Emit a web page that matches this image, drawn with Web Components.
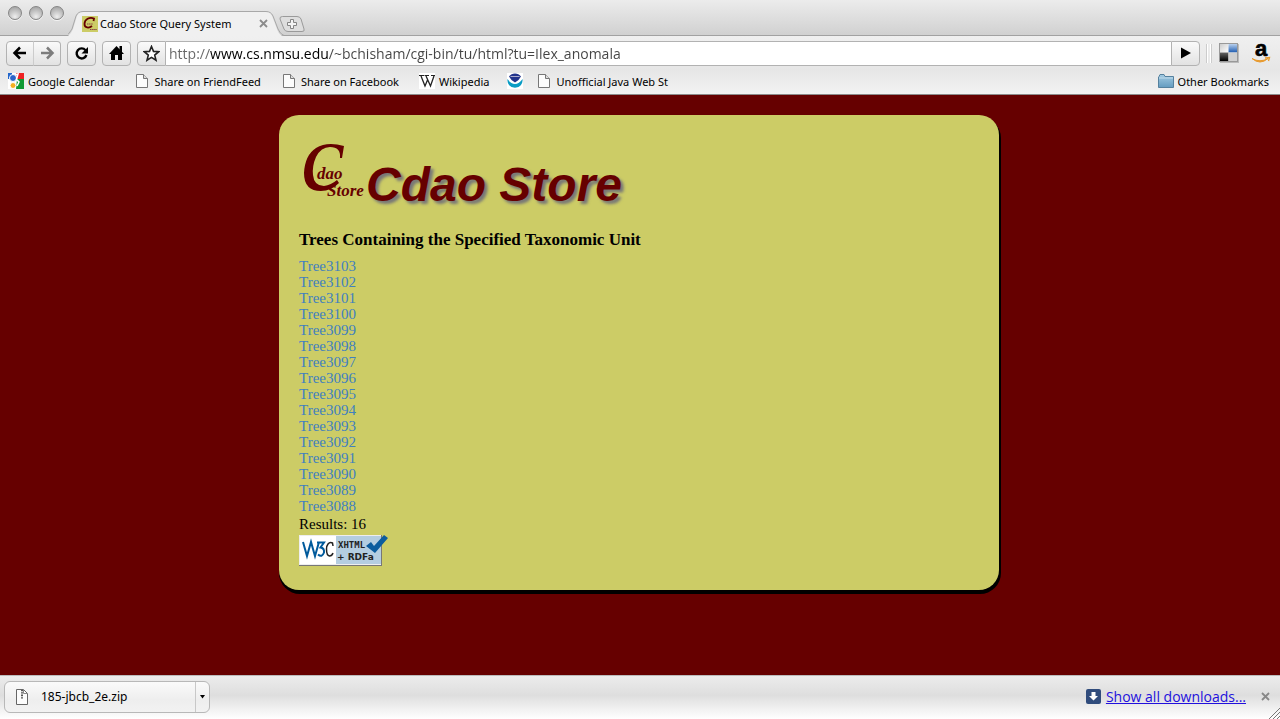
<!DOCTYPE html>
<html lang="en">
<head>
<meta charset="utf-8">
<title>Cdao Store Query System</title>
<style>
  html, body { margin: 0; height: 100%; }
  body { font-family: "Noto Sans", "Open Sans", sans-serif; font-size: 11px; color: #000; }
</style>
</head>
<body>
<browser-window>
  <tab-strip slot="top"></tab-strip>
  <nav-toolbar slot="top"></nav-toolbar>
  <bookmarks-bar slot="top"></bookmarks-bar>
  <store-card></store-card>
  <download-shelf slot="bottom"></download-shelf>
</browser-window>

<script>
function define(name, html) {
  const template = document.createElement('template');
  template.innerHTML = '<style>:host,*{box-sizing:border-box}svg{display:block;flex:none}button{font:inherit;color:inherit;margin:0;padding:0;cursor:pointer}</style>' + html;
  customElements.define(name, class extends HTMLElement {
    constructor() {
      super();
      this.attachShadow({ mode: 'open' }).append(template.content.cloneNode(true));
      if (this.shadowRoot.querySelector('ul[data-first]')) this.fillList();
    }
    fillList() {
      const list = this.shadowRoot.querySelector('ul[data-first]');
      for (let n = Number(list.dataset.first); n >= Number(list.dataset.last); n--) {
        const item = document.createElement('li');
        const link = document.createElement('a');
        link.href = '#Tree' + n;
        link.textContent = 'Tree' + n;
        item.append(link);
        list.append(item);
      }
    }
  });
}

define('browser-window', `
<style>
  :host { display: flex; flex-direction: column; min-height: 100vh; background: #600; }
  main { flex: 1; padding: 20px 22px 20px 20px; }
</style>
<header><slot name="top"></slot></header>
<main><slot></slot></main>
<footer><slot name="bottom"></slot></footer>`);

define('tab-strip', `
<style>
  :host { display: flex; height: 36px; padding-left: 8px; background: linear-gradient(#ececec, #d0d0d0); box-shadow: inset 0 -1px #a2a2a2; }
  .lights { display: flex; gap: 7px; padding-top: 6px; width: 60px; }
  .lights button { width: 14px; height: 14px; border-radius: 50%; border: 1px solid #858585; background: radial-gradient(circle at 50% 80%, #eee, #aaa 80%); box-shadow: 0 1px #f4f4f4; }
  .tab { position: relative; display: flex; align-items: center; width: 216px; height: 25px; margin-top: 11px; padding: 0 16px 0 14px; }
  .tab .shape { position: absolute; inset: 0; }
  .tab > :not(.shape) { position: relative; }
  .title { flex: 1; margin-left: 2px; white-space: nowrap; }
  button { border: 0; background: none; }
  .new { align-self: flex-end; height: 20px; margin-left: -5px; position: relative; }
</style>
<div class="lights"><button aria-label="Close"></button><button aria-label="Minimize"></button><button aria-label="Zoom"></button></div>
<div class="tab">
  <svg class="shape" width="216" height="25" viewBox="0 0 216 25"><path d="M0 25 Q3 23 5 18 L9 5 Q11 1 15 1 H198 Q202 1 204 5 L209 18 Q211 24 215 25 Z" fill="#f0f0f0"/><path d="M-3 24.500 Q1 24 4 18 L8 5 Q10 .5 15 .5 H198 Q203 .5 205 5 L210 18 Q212 23 216 24.500" fill="none" stroke="#a8a8a8"/></svg>
  <svg width="16" height="16" viewBox="0 0 16 16"><rect width="16" height="16" fill="#cc6"/><path d="M11.500 5 L12 2.500 C7.500 .5 2.500 3.500 2.500 8 C2.500 12 7 12.500 10 10" fill="none" stroke="#600" stroke-width="1.800"/><path d="M5 8h6M8 13.500h7" stroke="#844" stroke-dasharray="1.500 .6"/></svg>
  <span class="title">Cdao Store Query System</span>
  <button aria-label="Close tab"><svg width="9" height="9" viewBox="0 0 9 9"><path d="M1 1 8 8M8 1 1 8" stroke="#8c8c8c" stroke-width="1.800"/></svg></button>
</div>
<button class="new" aria-label="New tab"><svg width="28" height="20" viewBox="0 0 28 20"><path d="M3.500 .5 H18 Q21 .5 22 3 L25 13 Q26 15.500 23 15.500 H9 Q6 15.500 5 13 L1 3 Q.5 .5 3.500 .5 Z" fill="#dedede" stroke="#9a9a9a"/><path d="M11.500 3.500h3v3h3v3h-3v3h-3v-3h-3v-3h3z" fill="#f4f4f4" stroke="#858585"/></svg></button>`);

define('nav-toolbar', `
<style>
  :host { display: flex; align-items: center; height: 34px; padding: 0 9px 0 6px; background: linear-gradient(#f0f0f0, #e6e6e6); }
  button { display: flex; align-items: center; justify-content: center; width: 29px; height: 25px; border: 1px solid #b2b2b2; border-radius: 4px; background: linear-gradient(#fafafa, #e2e2e2); }
  .back { width: 28px; border-radius: 4px 0 0 4px; }
  .fwd { width: 28px; border-left-color: #ccc; margin: 0 6px 0 -1px; border-radius: 0 4px 4px 0; }
  .home { margin: 0 6px; }
  .star { border-radius: 4px 0 0 4px; }
  .field { flex: 1; min-width: 0; height: 25px; background: #fff; border: solid #b2b2b2; border-width: 1px 0; }
  input { display: block; width: 100%; height: 23px; padding: 0 3px; border: 0; outline: 0; font: 14px "Open Sans", "Noto Sans", sans-serif; color: transparent;
    background: linear-gradient(90deg, #666 44px, #000 44px, #000 163px, #444 163px); -webkit-background-clip: text; background-clip: text; }
  .go { border-radius: 0 4px 4px 0; margin-right: 7px; }
  .grip { width: 4px; height: 19px; border: solid #fff; border-width: 0 1px; box-shadow: 1px 0 #ccc, -1px 0 #ccc; margin: 0 8px 0 0; }
  .ext { border: 0; background: none; width: 20px; }
  .ext + .ext { margin-left: 12px; }
</style>
<button class="back" aria-label="Back"><svg width="16" height="14" viewBox="0 0 16 14"><path d="M8 1.500 2.500 7 8 12.500M3 7H14" fill="none" stroke="#000" stroke-width="2.500"/></svg></button>
<button class="fwd" aria-label="Forward"><svg width="16" height="14" viewBox="0 0 16 14"><path d="M8 1.500 13.500 7 8 12.500M13 7H2" fill="none" stroke="#7c7c7c" stroke-width="2.500"/></svg></button>
<button aria-label="Reload"><svg width="15" height="15" viewBox="0 0 15 15"><path d="M11.500 4.200 A5 5 0 1 0 12.400 9" fill="none" stroke="#000" stroke-width="2.400"/><path d="M14 1V7.500H7.500Z"/></svg></button>
<button class="home" aria-label="Home"><svg width="17" height="16" viewBox="0 0 17 16"><path d="M8.500 1 16 9H14V15H10V10H7V15H3V9H1ZM11.500 1H14V7L11.500 4Z"/></svg></button>
<button class="star" aria-label="Bookmark this page"><svg width="17" height="17" viewBox="0 0 17 17"><path d="M8.500 1.500 10.500 6.400 15.700 6.700 11.700 10.100 13 15.200 8.500 12.400 4 15.200 5.300 10.100 1.300 6.700 6.500 6.400Z" fill="#fff" stroke="#222" stroke-width="1.600"/></svg></button>
<div class="field"><input aria-label="Address" value="http://www.cs.nmsu.edu/~bchisham/cgi-bin/tu/html?tu=Ilex_anomala" spellcheck="false"></div>
<button class="go" aria-label="Go"><svg width="12" height="12" viewBox="0 0 12 12"><path d="M1 .5 11 6 1 11.500Z"/></svg></button>
<span class="grip"></span>
<button class="ext" aria-label="Delicious"><svg width="20" height="20" viewBox="0 0 20 20"><defs><linearGradient id="w" x2="1" y2="1"><stop stop-color="#ccc"/><stop offset="1" stop-color="#fff"/></linearGradient><linearGradient id="b" x2="0" y2="1"><stop stop-color="#b8d0ee"/><stop offset="1" stop-color="#1d5bb0"/></linearGradient><linearGradient id="k" x2="0" y2="1"><stop stop-color="#666"/><stop offset="1" stop-color="#000"/></linearGradient></defs><rect x="1" y="1" width="19" height="19" fill="#bbb"/><rect x=".5" y=".5" width="18" height="18" fill="#fff" stroke="#999"/><path fill="url(#w)" d="M1 1h8.500v8.500H1z"/><path fill="url(#b)" d="M9.500 1H18v8.500H9.500z"/><path fill="url(#k)" d="M1 9.500h8.500V18H1z"/><path fill="#d0d0d0" d="M9.500 9.500H18V18H9.500z"/></svg></button>
<button class="ext" aria-label="Amazon"><svg width="20" height="30" viewBox="0 -4 20 30"><text x="4" y="14" font-family="Liberation Sans, sans-serif" font-weight="700" font-size="22" stroke="#000" stroke-width=".6">a</text><path d="M1 16.500 Q9 21 17 16.500 Q9 23.500 1 16.500" fill="#e89a2c" stroke="#e89a2c"/><path d="M14 16 18.500 15.500 17.500 19" fill="none" stroke="#e89a2c" stroke-width="1.300"/></svg></button>`);

define('page-icon', `
<style>:host { display: block; flex: none; }</style>
<svg width="12" height="14" viewBox="0 0 12 14"><path d="M.5 .5H7.500L11.500 4.500V13.500H.5Z" fill="#fcfcfc" stroke="#777"/><path d="M7.500 .5V4.500H11.500" fill="#ddd" stroke="#777"/></svg>`);

define('bookmarks-bar', `
<style>
  :host { display: flex; align-items: center; height: 25px; padding: 0 11px 2px 8px; background: linear-gradient(#e6e6e6, #f2f2f2); border-bottom: 1px solid #8c8c8c; white-space: nowrap; }
  a { display: flex; align-items: center; gap: 6px; height: 22px; margin-right: 22px; color: #000; text-decoration: none; }
  .cal, .wiki, .other { gap: 4px; }
  .wiki { margin-right: 20px; }
  .wiki, .noaa { margin-left: -2px; }
  .noaa { margin-right: 15px; }
  .other { margin: 0 0 0 auto; }
</style>
<a class="cal" href="#calendar"><svg width="16" height="16" viewBox="0 0 16 16"><rect width="16" height="16" fill="#fff"/><path fill="#e22" d="M8 0h8v6H9z"/><path fill="#193" d="M9 6h7v10H8z"/><path fill="#26c" d="M0 0h4v6H0z"/><circle cx="5" cy="5" r="3.500" fill="#2b64c8" stroke="#fff"/><circle cx="5" cy="12.500" r="3" fill="#f5b020" stroke="#fff"/><path d="M8 1.500 10 1 8.500 6.500 11 9 9 13" fill="none" stroke="#fff" stroke-width="1.500"/></svg>Google Calendar</a>
<a href="#friendfeed"><page-icon></page-icon>Share on FriendFeed</a>
<a href="#facebook"><page-icon></page-icon>Share on Facebook</a>
<a class="wiki" href="#wikipedia"><svg width="16" height="16" viewBox="0 0 16 16"><rect width="16" height="16" fill="#fff"/><path d="M0 2.500H5M5.500 2.500H10M12 2.500H16" stroke="#222"/><path d="M2 3 6 13 8.500 7M7 3 11.500 13 15 3" fill="none" stroke="#222" stroke-width="1.300"/></svg>Wikipedia</a>
<a class="noaa" href="#noaa" aria-label="NOAA"><svg width="16" height="16" viewBox="0 0 16 16"><rect width="16" height="16" fill="#fff"/><path fill="#22348c" d="M2 3.500A7.500 7.500 0 0 1 14 3.500Q12 7.500 8 9.500Q4 7.500 2 3.500Z"/><path fill="#0a9cc4" d="M.5 6Q4 11 8 11Q12 11 15.500 6A7.600 7.600 0 1 1 .5 6Z"/><path d="M3.500 3.500H12.500" stroke="#aac"/></svg></a>
<a href="#java"><page-icon></page-icon>Unofficial Java Web St</a>
<a class="other" href="#other"><svg width="16" height="14" viewBox="0 0 16 14"><defs><linearGradient id="f" x2="0" y2="1"><stop stop-color="#a4cbe2"/><stop offset="1" stop-color="#649cc0"/></linearGradient></defs><path d="M.5 3V13.500H15.500V2.500H7L6 .5H2L1 2.500Z" fill="url(#f)" stroke="#55819e"/><path d="M1 4H15" stroke="#c0dcec"/></svg>Other Bookmarks</a>`);

define('w3c-badge', `
<style>
  :host { display: block; }
</style>
<a href="#validate" aria-label="Valid XHTML + RDFa"><svg width="89" height="32" viewBox="0 0 89 32"><path d="M0 1H83V32H0Z" fill="#777"/><path d="M0 1H82V31H0Z" fill="#eee"/><path d="M1 2H37V30H1Z" fill="#fff"/><path d="M37 2H82V30H37Z" fill="#b4cde0"/>
<g fill="none"><path stroke="#005a9c" stroke-width="2" d="M4 8 8 22 12 8 16 22 20 8M18 8.500H25L21.500 13.500Q25.500 14 25 18.500Q23 24 19 20.500"/><path stroke="#222" stroke-width="1.500" d="M34 12 33.500 9Q31 7.500 29 10Q27.500 12 27.500 15Q27.500 21.500 30.500 22Q33 22 34 19"/></g>
<text x="39" y="14" font-family="DejaVu Sans Mono, monospace" font-weight="700" font-size="9" fill="#222">XHTML</text>
<text x="38" y="26" font-family="DejaVu Sans, sans-serif" font-weight="700" font-size="9" fill="#222">+ RDFa</text>
<path fill="#0b5c9e" d="M67 12 72 8 75 12 85 1 89 4 76 19Z"/></svg></a>`);

define('store-logo', `
<style>
  :host { display: block; flex: none; }
  text { font-family: "Liberation Serif", serif; font-style: italic; fill: #600; }
  .small { font-size: 17px; font-weight: 700; }
</style>
<svg width="67" height="76" viewBox="0 0 67 76" role="img" aria-label="Cdao Store">
<path d="M45 11 43 23 41 23Q42 12 31 12Q22 12 17 22Q13 31 14 40Q15 51 25 51Q32 50 38 45L40 48Q32 56 22 56Q5 56 5 38Q6 20 17 13Q28 6 45 11Z" fill="#600"/>
<text class="small" x="18" y="44">dao</text><text class="small" x="28" y="61">Store</text></svg>`);

define('store-card', `
<style>
  :host { display: block; width: min(720px, 100%); margin: 0 auto; padding: 20px 20px 24px; background: #cc6; border-radius: 20px; box-shadow: 1px 3px 0 1px #000; font: 15px/16px "Liberation Serif", serif; }
  header { display: flex; align-items: flex-end; }
  h1 { margin: 0; font: italic 700 48px/52px "Liberation Sans", Arial, sans-serif; color: #600; text-shadow: 3px 3px 3px #777; }
  h2 { margin: 19px 0 8px; font-size: 17px; line-height: 20px; }
  ul { margin: 0; padding: 0; list-style: none; }
  ul a { color: #4080c0; text-decoration: none; }
  p { margin: 0; line-height: 20px; }
</style>
<header><store-logo></store-logo><h1>Cdao Store</h1></header>
<h2>Trees Containing the Specified Taxonomic Unit</h2>
<ul data-first="3103" data-last="3088"></ul>
<p>Results: 16</p>
<w3c-badge></w3c-badge>`);

define('download-shelf', `
<style>
  :host { display: flex; align-items: center; height: 44px; padding: 0 10px 2px 4px; position: relative; background: linear-gradient(#ececec, #dedede 45%, #fff); border-top: 1px solid #bbb; }
  .item { display: flex; height: 32px; width: 206px; border: 1px solid #b8b8b8; border-radius: 6px; background: linear-gradient(#fafafa, #eee 60%, #f2f2f2); }
  .item button { display: flex; align-items: center; border: 0; background: none; }
  .item .file { flex: 1; gap: 13px; padding-left: 11px; font-size: 12px; }
  .item .menu { width: 14px; justify-content: center; border-left: 1px solid #c8c8c8; }
  .all { margin-left: auto; display: flex; align-items: center; gap: 5px; font: 14px "Open Sans", "Noto Sans", sans-serif; color: #2210dd; }
  .close { margin-left: 15px; border: 0; background: none; }
  .resize { position: absolute; right: 0; bottom: 0; }
</style>
<div class="item">
  <button class="file"><svg width="12" height="16" viewBox="0 0 12 16"><path d="M.5 .5H7.500L11.500 4.500V15.500H.5Z" fill="#fcfcfc" stroke="#666"/><path d="M7.500 .5V4.500H11.500" fill="none" stroke="#888"/><path d="M6 1V10" stroke="#555" stroke-width="2" stroke-dasharray="1 .7"/></svg>185-jbcb_2e.zip</button>
  <button class="menu" aria-label="Download options"><svg width="5" height="4" viewBox="0 0 5 4"><path d="M0 0H5L2.500 3.500Z"/></svg></button>
</div>
<a class="all" href="#downloads"><svg width="15" height="15" viewBox="0 0 15 15"><rect width="15" height="15" rx="2" fill="#304c7c"/><path d="M5.500 3H9.500V7H12L7.500 11.500 3 7H5.500Z" fill="#fff"/></svg>Show all downloads...</a>
<button class="close" aria-label="Close downloads"><svg width="9" height="9" viewBox="0 0 9 9"><path d="M1 1 8 8M8 1 1 8" stroke="#888" stroke-width="1.800"/></svg></button>
<svg class="resize" width="12" height="12" viewBox="0 0 12 12"><path d="M1 12 12 1M5 12 12 5M9 12 12 9" stroke="#777"/></svg>`);
</script>
</body>
</html>
